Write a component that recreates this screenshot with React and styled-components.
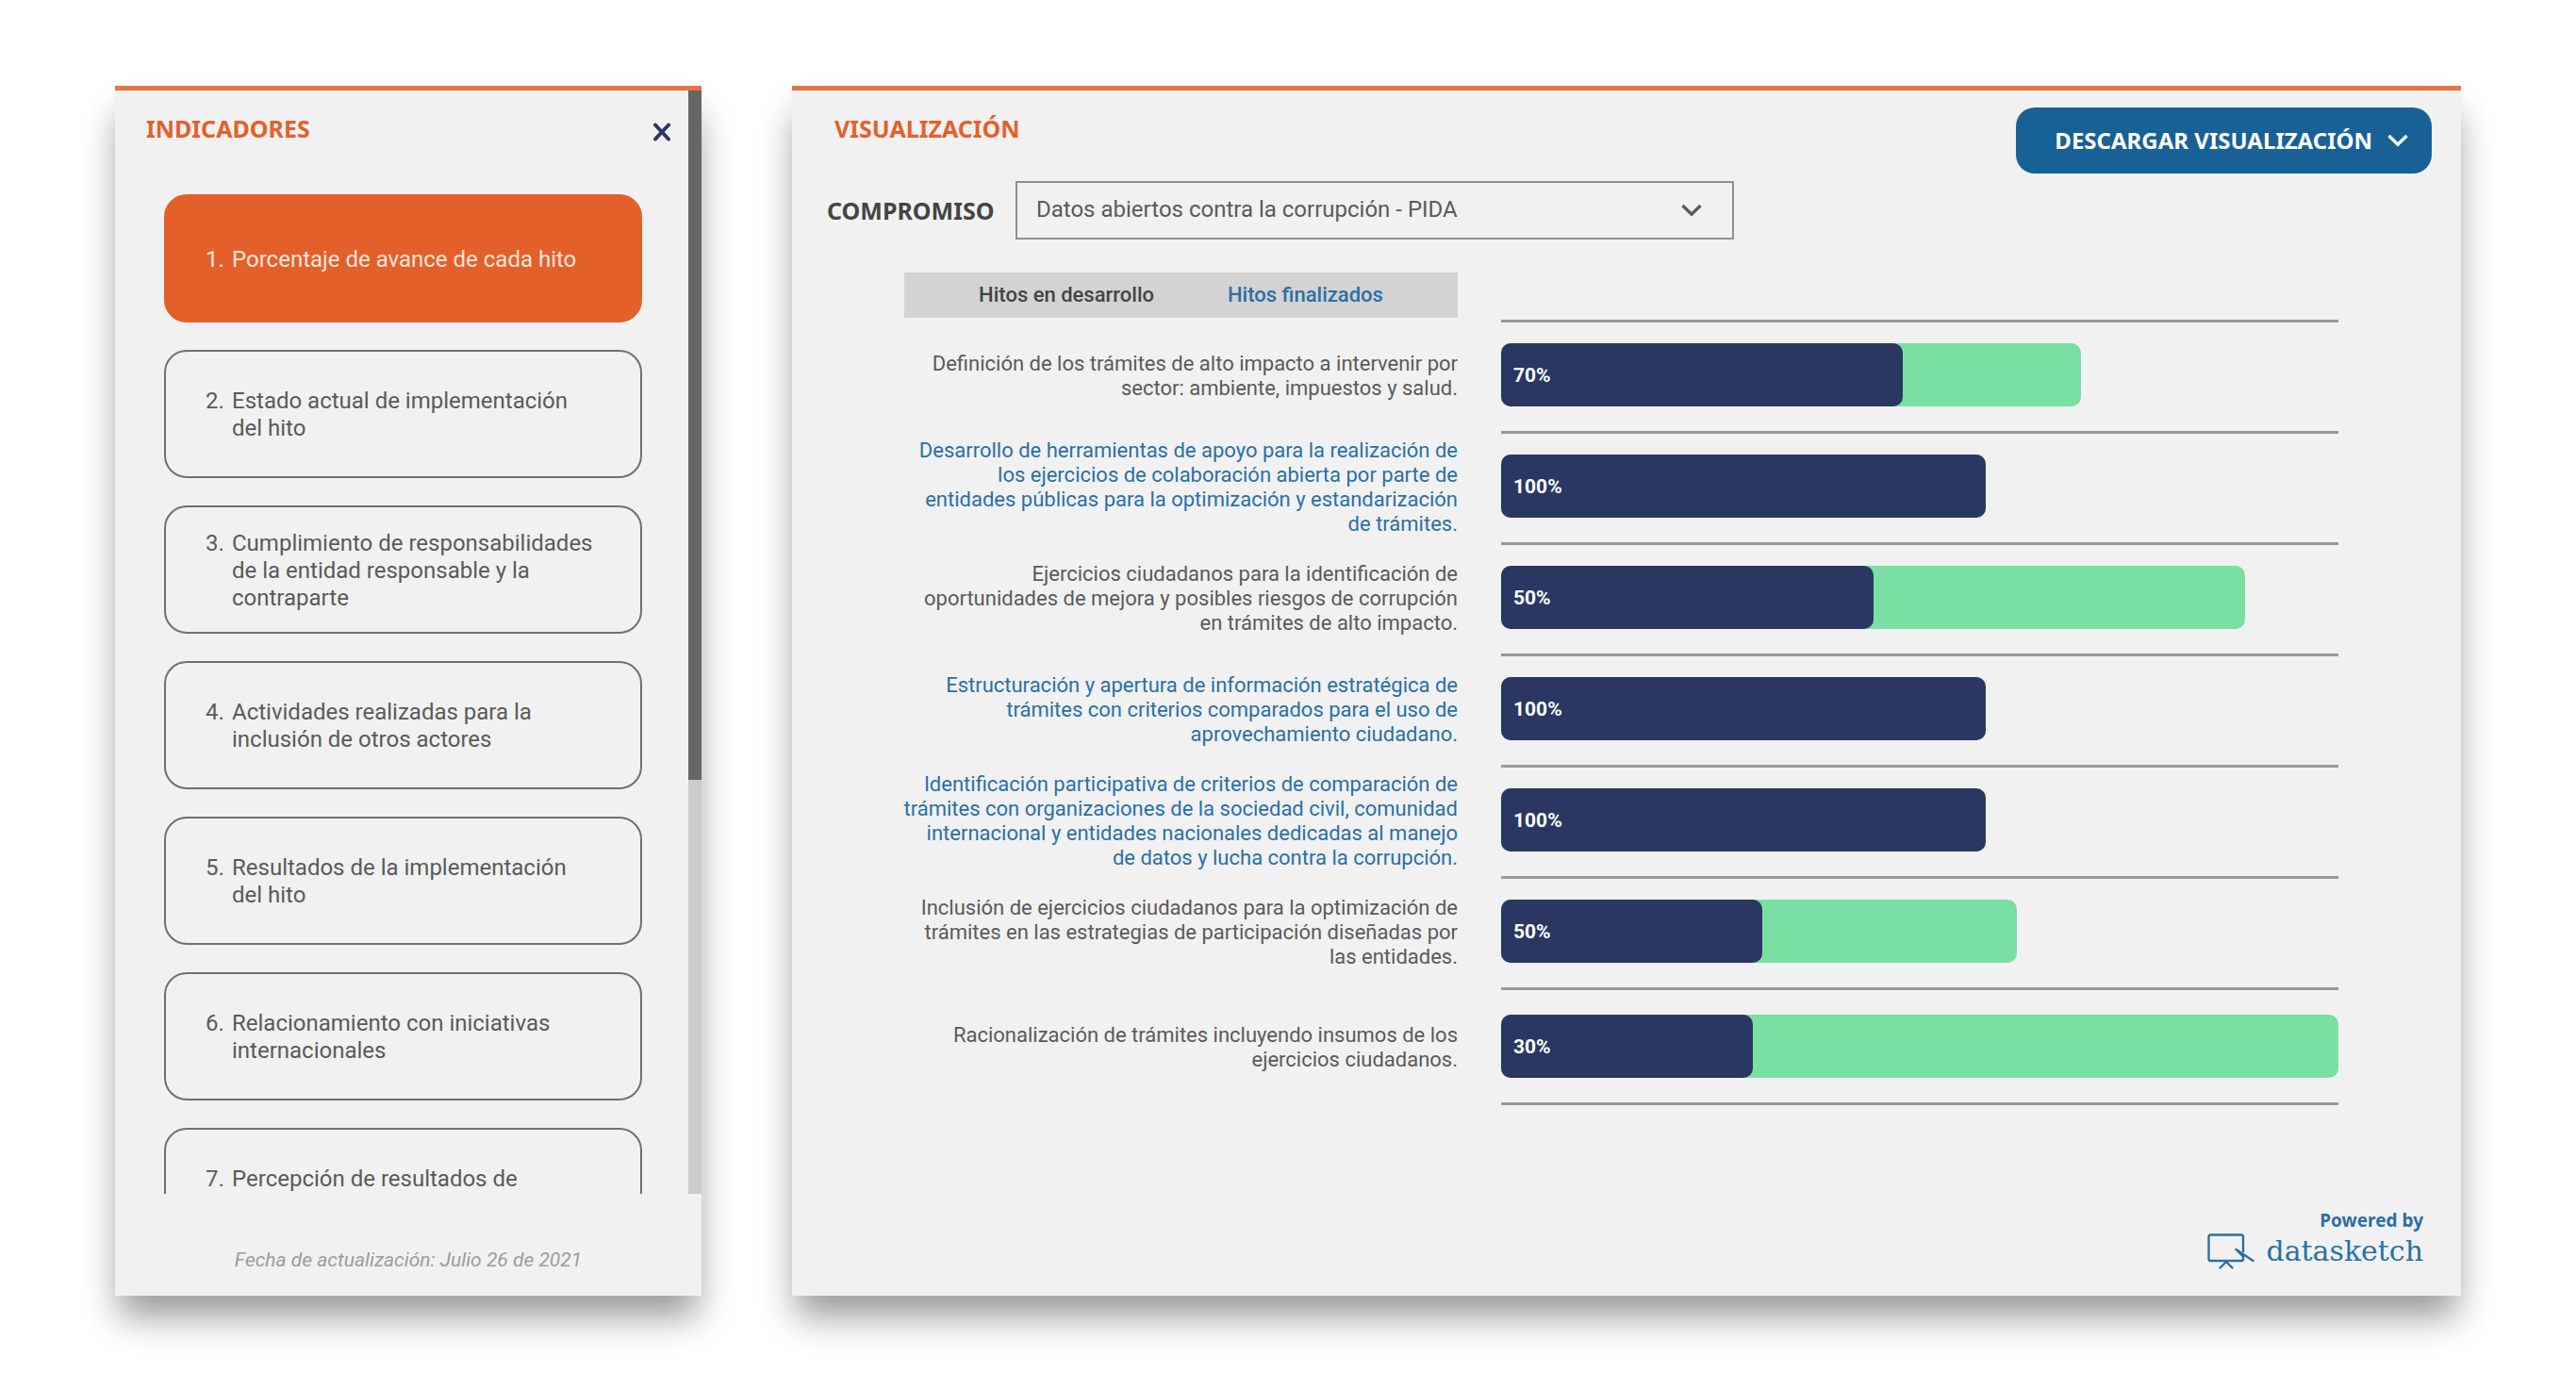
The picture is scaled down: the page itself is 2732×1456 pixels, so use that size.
import React, { useState } from "react";
import styled, { createGlobalStyle } from "styled-components";

const color = {
  panel: "#f1f1f1",
  orange: "#e4602a",
  rule: "#e7733f",
  navy: "#293762",
  green: "#7adfa2",
  blue: "#186196",
  link: "#2a70a5",
  text: "#5a5a5a",
  strong: "#444444",
  line: "#999999",
};

const textFont = `Roboto, "Noto Sans", sans-serif`;
const titleFont = `"Noto Sans", "Open Sans", sans-serif`;

const GlobalStyle = createGlobalStyle`
  *, *::before, *::after { box-sizing: border-box; }
  body { margin: 0; background: #ffffff; color: ${color.text}; font-family: ${textFont}; }
  button, select { font: inherit; color: inherit; margin: 0; }
`;

const Page = styled.div`
  display: flex;
  align-items: stretch;
  gap: 96px;
  padding: 91px 122px 82px;
`;

const Panel = styled.section`
  display: flex;
  flex-direction: column;
  min-width: 0;
  background: ${color.panel};
  border-top: 5px solid ${color.rule};
  box-shadow: 0 26px 36px -4px rgba(0, 0, 0, 0.4);
`;

const SidePanel = styled(Panel)`
  flex: 0 0 25%;
`;

const MainPanel = styled(Panel)`
  flex: 1;
`;

const Title = styled.h2`
  margin: 0;
  color: ${color.orange};
  font: 700 25px/32px ${titleFont};
`;

const ScrollArea = styled.div`
  flex: 1 1 0px;
  min-height: 0;
  display: flex;
  overflow: hidden;
`;

const ScrollContent = styled.div`
  flex: 1;
  min-width: 0;
  overflow-y: auto;
  scrollbar-width: none;
`;

const ScrollTrack = styled.div`
  flex: 0 0 14px;
  background: #cbcbcb;
`;

const ScrollThumb = styled.div`
  height: 62.5%;
  background: #666666;
`;

const SideHeader = styled.header`
  display: flex;
  justify-content: space-between;
  align-items: center;
  padding: 24px 18px 0 33px;
`;

const CloseButton = styled.button`
  display: flex;
  padding: 8px 0 0;
  border: 0;
  background: none;
  color: ${color.navy};
  cursor: pointer;
`;

const IndicatorList = styled.ol`
  display: flex;
  flex-direction: column;
  gap: 29px;
  margin: 0;
  padding: 54px 49px 40px 52px;
  list-style: none;
`;

const Indicator = styled.button`
  display: flex;
  align-items: center;
  width: 100%;
  height: 136px;
  padding: 2px 20px 0 42px;
  border: 2px solid ${(p) => (p.$active ? color.orange : "#707070")};
  border-radius: 24px;
  background: ${(p) => (p.$active ? color.orange : "transparent")};
  color: ${(p) => (p.$active ? "#fbe6dc" : color.text)};
  font-size: 24px;
  line-height: 29px;
  text-align: left;
  cursor: pointer;
`;

const IndicatorBody = styled.span`
  display: flex;
  align-items: flex-start;
`;

const IndicatorNumber = styled.span`
  flex: 0 0 28px;
`;

const IndicatorName = styled.span`
  white-space: pre-line;
`;

const Updated = styled.p`
  margin: 0;
  padding: 56px 0 24px;
  color: #9c9c9c;
  font-size: 21px;
  line-height: 28px;
  font-style: italic;
  text-align: center;
`;

const MainHeader = styled.header`
  display: flex;
  justify-content: space-between;
  align-items: flex-start;
  padding: 18px 31px 0 45px;

  ${Title} {
    padding-top: 6px;
  }
`;

const DownloadButton = styled.button`
  display: flex;
  align-items: center;
  justify-content: flex-end;
  gap: 16px;
  min-width: 441px;
  height: 70px;
  padding: 0 25px;
  border: 0;
  border-radius: 20px;
  background: ${color.blue};
  color: #ffffff;
  font: 700 24px/32px ${titleFont};
  cursor: pointer;
`;

const Filter = styled.div`
  display: flex;
  align-items: center;
  gap: 22px;
  padding: 8px 37px 0;
`;

const FilterLabel = styled.label`
  flex: 0 0 178px;
  color: ${color.strong};
  font: 700 25px/32px ${titleFont};
`;

const SelectBox = styled.div`
  position: relative;
  flex: 1;
  max-width: 762px;

  svg {
    position: absolute;
    top: 24px;
    right: 34px;
    pointer-events: none;
  }
`;

const Select = styled.select`
  appearance: none;
  display: block;
  width: 100%;
  height: 62px;
  padding: 0 60px 2px 20px;
  border: 2px solid #8f8f8f;
  border-radius: 0;
  background: transparent;
  color: ${color.text};
  font-size: 24px;
  line-height: 32px;
`;

const Chart = styled.div`
  padding: 35px 130px 0 119px;
`;

const columns = `
  display: grid;
  grid-template-columns: minmax(0, 587fr) minmax(0, 888fr);
  column-gap: 46px;
`;

const Legend = styled.div`
  ${columns}
  margin-bottom: 2px;
`;

const LegendBar = styled.div`
  display: flex;
  justify-content: center;
  align-items: center;
  gap: 78px;
  height: 48px;
  background: #d3d3d3;
`;

const LegendButton = styled.button`
  padding: 0;
  border: 0;
  background: none;
  color: ${(p) => (p.$done ? color.link : color.strong)};
  font-size: 22px;
  line-height: 28px;
  font-weight: 500;
  cursor: pointer;
`;

const Rows = styled.ul`
  margin: 0;
  padding: 0;
  list-style: none;
`;

const Track = styled.div`
  padding: 22px 0 26px;
  border-top: 3px solid ${color.line};
`;

const Row = styled.li`
  ${columns}

  &:last-child ${Track} {
    padding: 26px 0;
    border-bottom: 3px solid ${color.line};
  }
`;

const Milestone = styled.p`
  align-self: center;
  justify-self: end;
  margin: 0;
  padding-top: 2px;
  color: ${(p) => (p.$done ? color.link : color.text)};
  font-size: 22px;
  line-height: 26px;
  text-align: right;
  white-space: pre;
`;

const Bar = styled.div`
  height: 67px;
  border-radius: 10px;
  background: ${color.green};
`;

const Fill = styled.div`
  display: flex;
  align-items: center;
  height: 100%;
  padding-left: 13px;
  border-radius: 10px;
  background: ${color.navy};
  color: #ffffff;
  font-size: 21px;
  line-height: 28px;
  font-weight: 700;
`;

const Credit = styled.footer`
  display: flex;
  flex-direction: column;
  align-items: flex-end;
  gap: 2px;
  margin-top: auto;
  padding: 110px 40px 28px;
  color: ${color.link};
  font: 700 19px/24px ${titleFont};
`;

const Brand = styled.a`
  display: flex;
  align-items: center;
  gap: 12px;
  color: inherit;
  font: 400 30px/38px "DejaVu Serif", serif;
  text-decoration: none;
`;

const Chevron = () => (
  <svg width="22" height="14" viewBox="0 0 22 14" fill="none" stroke="currentColor" strokeWidth="3.4" aria-hidden="true">
    <path d="M1.5 2 11 11.2 20.5 2" />
  </svg>
);

const Cross = () => (
  <svg width="20" height="20" viewBox="0 0 20 20" fill="none" stroke="currentColor" strokeWidth="4" strokeLinecap="round" aria-hidden="true">
    <path d="M3 2.500 17 17.500M17 2.500 3 17.500" />
  </svg>
);

const Easel = () => (
  <svg width="50" height="38" viewBox="0 0 50 38" fill="none" stroke="currentColor" strokeWidth="2.4" strokeLinecap="round" strokeLinejoin="round" aria-hidden="true">
    <path d="M38 19V3.500Q38 1.500 36 1.500H3.500Q1.500 1.500 1.500 3.500V27Q1.500 29 3.500 29H36Q38 29 38 27V25.500" />
    <path d="M30.500 17 48.500 29M30.500 17 38 24.500" />
    <path d="M20 30 13.500 36.500M20 30 26.500 36.500" />
  </svg>
);

const indicators = [
  "Porcentaje de avance de cada hito",
  "Estado actual de implementación\ndel hito",
  "Cumplimiento de responsabilidades\nde la entidad responsable y la\ncontraparte",
  "Actividades realizadas para la\ninclusión de otros actores",
  "Resultados de la implementación\ndel hito",
  "Relacionamiento con iniciativas\ninternacionales",
  "Percepción de resultados de\n\u00a0",
];

const milestones = [
  { name: "Definición de los trámites de alto impacto a intervenir por\nsector: ambiente, impuestos y salud.", value: 70, total: 615, filled: 426 },
  { name: "Desarrollo de herramientas de apoyo para la realización de\nlos ejercicios de colaboración abierta por parte de\nentidades públicas para la optimización y estandarización\nde trámites.", value: 100, total: 514, filled: 514 },
  { name: "Ejercicios ciudadanos para la identificación de\noportunidades de mejora y posibles riesgos de corrupción\nen trámites de alto impacto.", value: 50, total: 789, filled: 395 },
  { name: "Estructuración y apertura de información estratégica de\ntrámites con criterios comparados para el uso de\naprovechamiento ciudadano.", value: 100, total: 514, filled: 514 },
  { name: "Identificación participativa de criterios de comparación de\ntrámites con organizaciones de la sociedad civil, comunidad\ninternacional y entidades nacionales dedicadas al manejo\nde datos y lucha contra la corrupción.", value: 100, total: 514, filled: 514 },
  { name: "Inclusión de ejercicios ciudadanos para la optimización de\ntrámites en las estrategias de participación diseñadas por\nlas entidades.", value: 50, total: 547, filled: 277 },
  { name: "Racionalización de trámites incluyendo insumos de los\nejercicios ciudadanos.", value: 30, total: 888, filled: 267 },
];

const longest = Math.max(...milestones.map((m) => m.total));

export default function App() {
  const [active, setActive] = useState(0);

  return (
    <>
      <GlobalStyle />
      <Page>
        <SidePanel>
          <ScrollArea>
            <ScrollContent>
              <SideHeader>
                <Title>INDICADORES</Title>
                <CloseButton type="button" aria-label="Cerrar">
                  <Cross />
                </CloseButton>
              </SideHeader>
              <IndicatorList>
                {indicators.map((name, i) => (
                  <li key={name}>
                    <Indicator type="button" $active={i === active} onClick={() => setActive(i)}>
                      <IndicatorBody>
                        <IndicatorNumber>{i + 1}.</IndicatorNumber>
                        <IndicatorName>{name}</IndicatorName>
                      </IndicatorBody>
                    </Indicator>
                  </li>
                ))}
              </IndicatorList>
            </ScrollContent>
            <ScrollTrack>
              <ScrollThumb />
            </ScrollTrack>
          </ScrollArea>
          <Updated>Fecha de actualización: Julio 26 de 2021</Updated>
        </SidePanel>

        <MainPanel>
          <MainHeader>
            <Title>VISUALIZACIÓN</Title>
            <DownloadButton type="button">
              DESCARGAR VISUALIZACIÓN
              <Chevron />
            </DownloadButton>
          </MainHeader>
          <Filter>
            <FilterLabel htmlFor="compromiso">COMPROMISO</FilterLabel>
            <SelectBox>
              <Select id="compromiso">
                <option>Datos abiertos contra la corrupción - PIDA</option>
              </Select>
              <Chevron />
            </SelectBox>
          </Filter>
          <Chart>
            <Legend>
              <LegendBar>
                <LegendButton type="button">Hitos en desarrollo</LegendButton>
                <LegendButton type="button" $done>Hitos finalizados</LegendButton>
              </LegendBar>
            </Legend>
            <Rows>
              {milestones.map((m) => (
                <Row key={m.name}>
                  <Milestone $done={m.value === 100}>{m.name}</Milestone>
                  <Track>
                    <Bar style={{ width: `${(m.total / longest) * 100}%` }}>
                      <Fill style={{ width: `${(m.filled / m.total) * 100}%` }}>{m.value}%</Fill>
                    </Bar>
                  </Track>
                </Row>
              ))}
            </Rows>
          </Chart>
          <Credit>
            <span>Powered by</span>
            <Brand href="#">
              <Easel />
              datasketch
            </Brand>
          </Credit>
        </MainPanel>
      </Page>
    </>
  );
}
